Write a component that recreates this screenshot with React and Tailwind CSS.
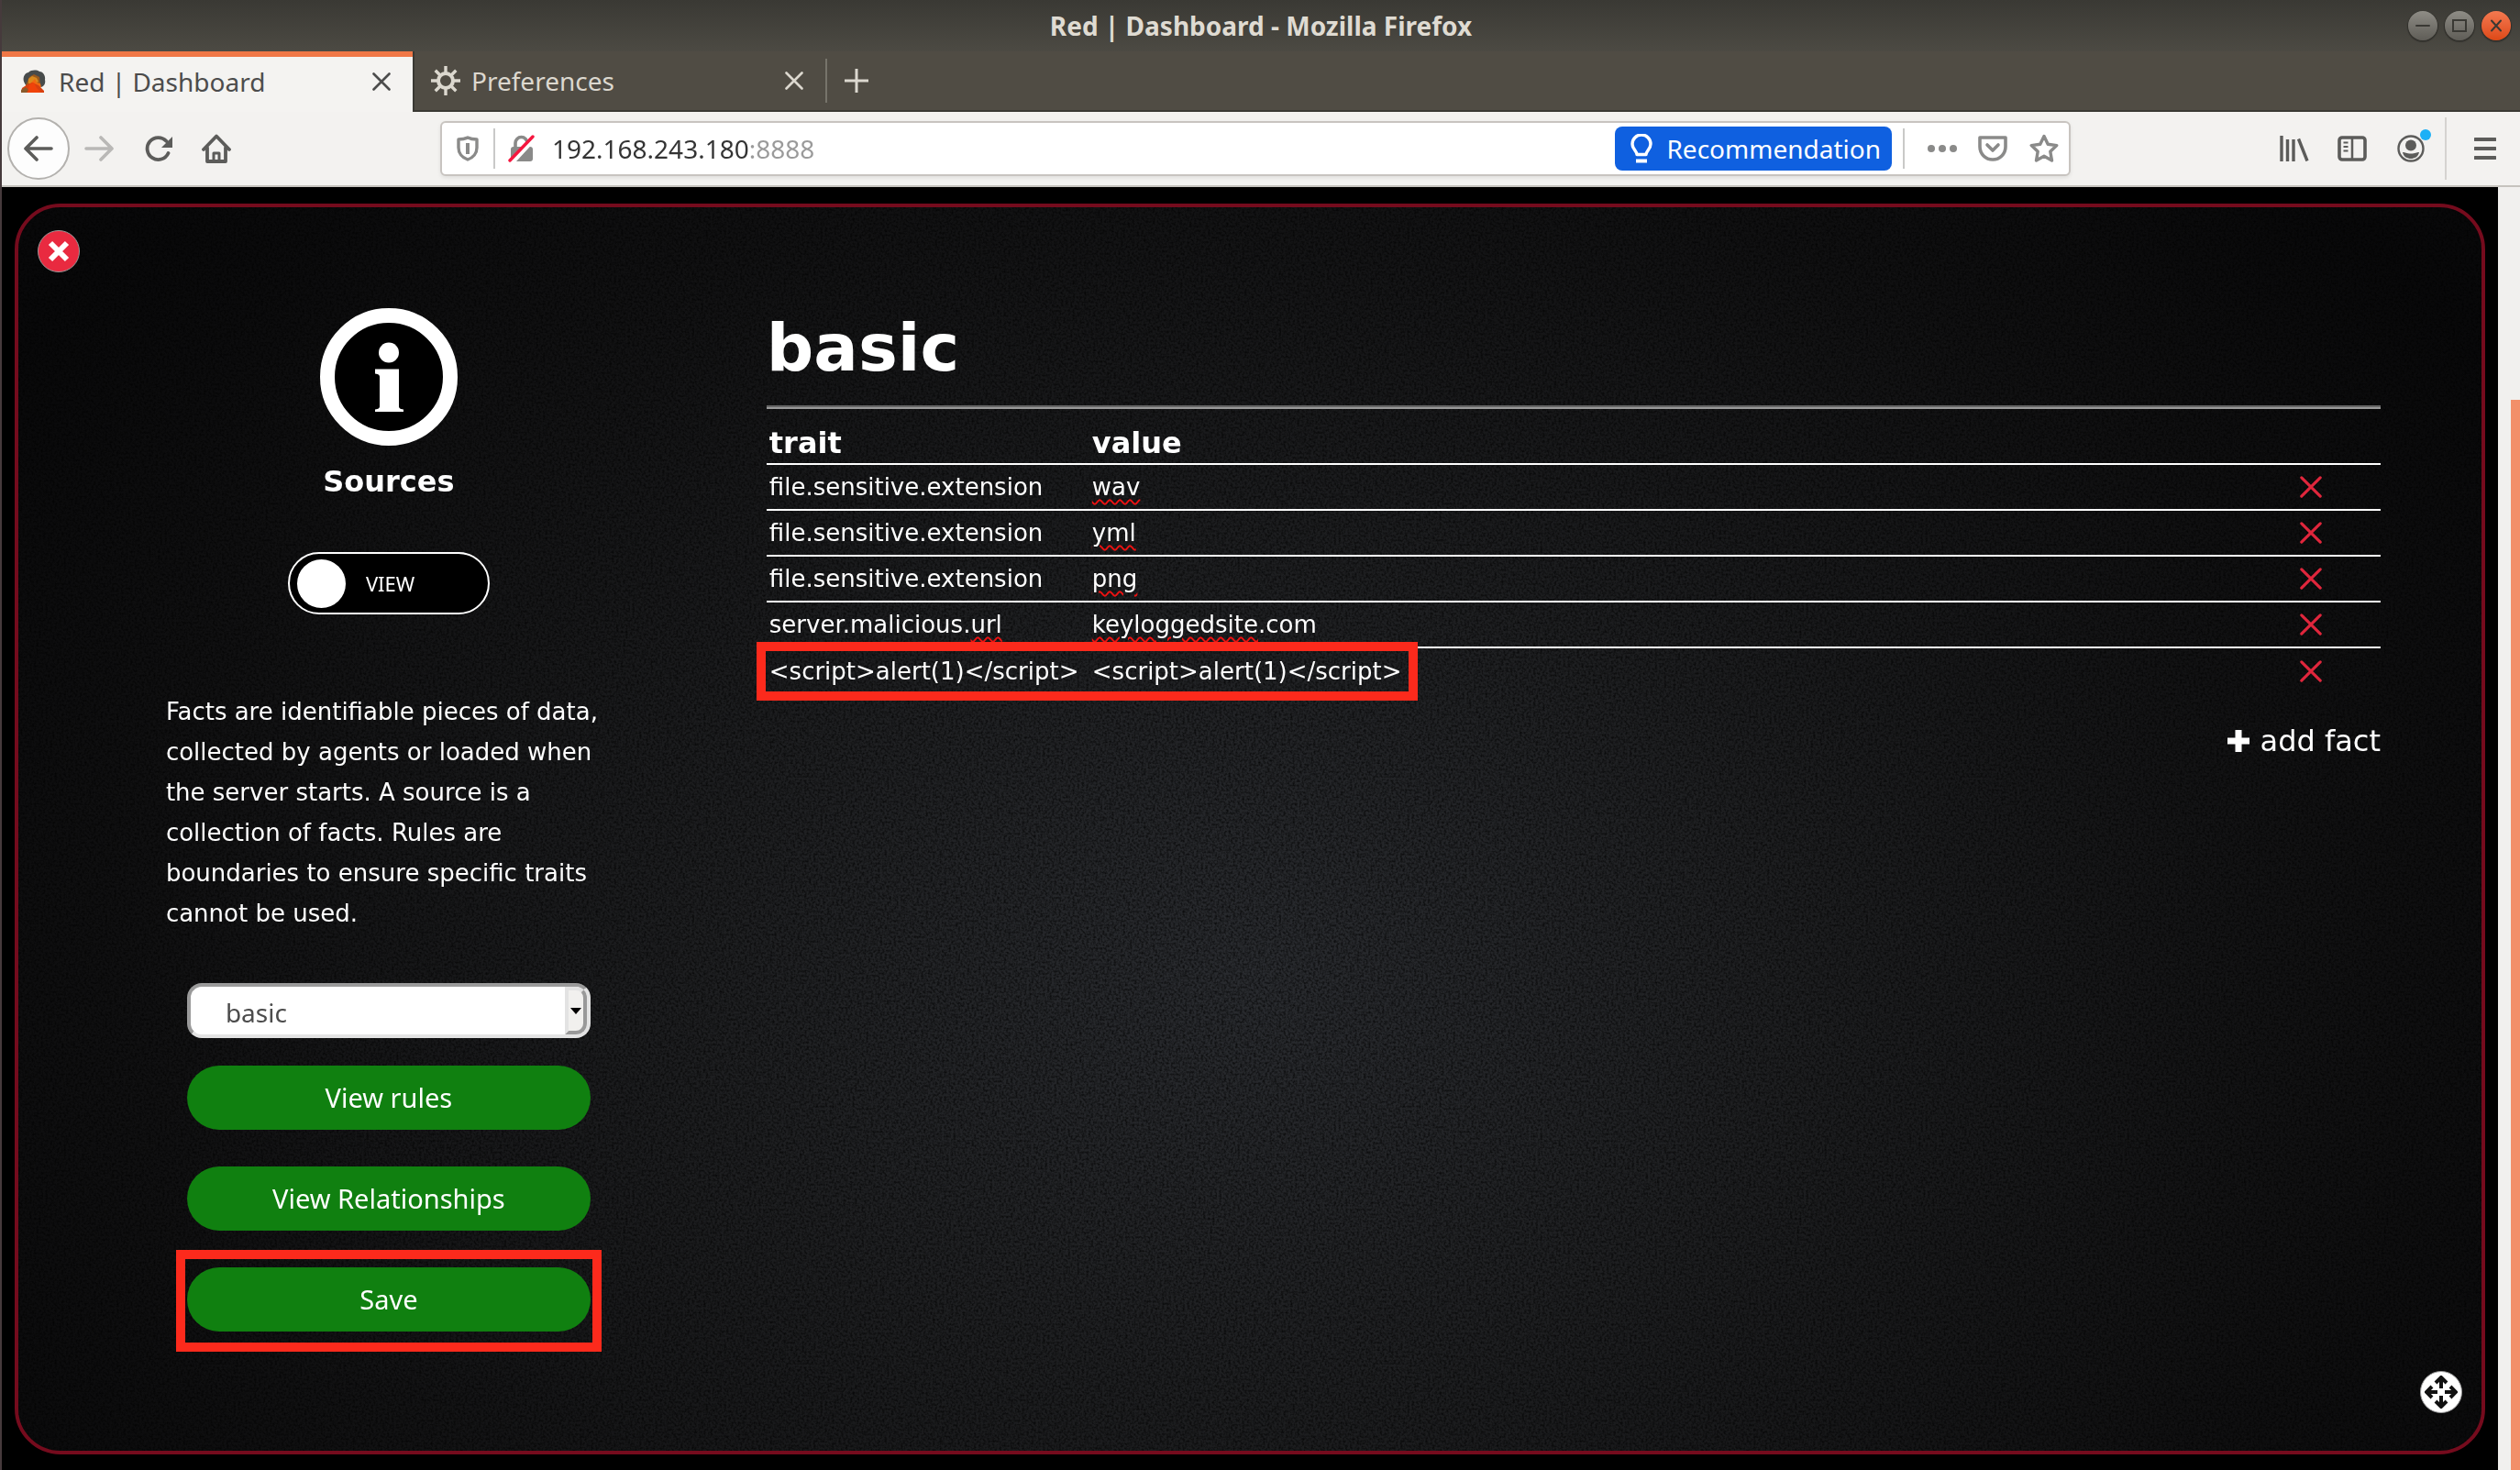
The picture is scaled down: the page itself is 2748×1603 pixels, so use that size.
const UI = "font-['Noto_Sans',sans-serif]";

function Ico({ vb = "0 0 16 16", className, children }) {
  return (
    <svg viewBox={vb} className={className} fill="none" stroke="currentColor" strokeWidth="2" strokeLinecap="round" strokeLinejoin="round" aria-hidden="true">
      {children}
    </svg>
  );
}

function CloseX({ className }) {
  return (
    <Ico vb="0 0 20 20" className={className}>
      <path d="M1.500 1.500l17 17M18.500 1.500l-17 17" strokeWidth="2.600" />
    </Ico>
  );
}

function TitleBar() {
  const dot = "flex size-8 items-center justify-center rounded-full shadow-[0_1px_1px_1px_rgba(0,0,0,0.3)]";
  return (
    <header className="grid h-14 grid-cols-[1fr_auto_1fr] items-center bg-linear-to-b from-[#3a3934] to-[#4c4a43]">
      <h1 className="col-start-2 text-[28px] font-bold leading-8 text-[#dfdbd2]">Red | Dashboard - Mozilla Firefox</h1>
      <div className="flex justify-end gap-2 pr-[10px] text-[#3a3934]">
        <button aria-label="Minimize" className={`${dot} bg-linear-to-b from-[#8f8d86] to-[#5f5d57]`}>
          <Ico className="size-4"><path d="M1 8h14" /></Ico>
        </button>
        <button aria-label="Maximize" className={`${dot} bg-linear-to-b from-[#8f8d86] to-[#5f5d57]`}>
          <Ico className="size-4"><path d="M1 2h14v12H1z" strokeLinejoin="miter" /></Ico>
        </button>
        <button aria-label="Close" className={`${dot} bg-linear-to-b from-[#f4794f] to-[#dd4814]`}>
          <Ico className="size-4"><path d="M3 2.500l10 11M13 2.500l-10 11" /></Ico>
        </button>
      </div>
    </header>
  );
}

function Tabs() {
  return (
    <nav className="flex h-[66px] items-stretch bg-[#504c44]" aria-label="Tabs">
      <div className="flex w-[448px] items-center border-t-4 border-[#f07746] bg-[#f4f3f1] pb-1 pl-5 pr-6 text-[#4c4c4c] shadow-[inset_0_2px_0_#f07746]">
        <svg viewBox="0 0 28 26" className="w-7" aria-hidden="true">
          <path d="M5 15C2 10 4 4 9 3c3-3 9-3 12-1 4 0 7 5 6 9 1 4-1 7-4 8l-8 1H8z" fill="#474b4b" />
          <path d="M6 17l4-9 5-3 6 3 1 9-5 4H8z" fill="#9a5a1e" />
          <path d="M9 10l4-3 5 2 2 4-6 3-5-1z" fill="#d98a1e" />
          <path d="M12 14l4-4 2 4 4 1 1 4-9 2z" fill="#f06a10" />
          <path d="M1 25l1-5 6-4 5-2 7 3 6 6v2z" fill="#d8400f" />
          <path d="M10 16l5-2 3 6 5 5H8z" fill="#f0430a" />
          <path d="M1 22l5-3 3 3-2 3H1z" fill="#8a5a2c" />
        </svg>
        <span className="ml-[14px] flex-1 text-[28px] leading-9">Red | Dashboard</span>
        <button aria-label="Close tab"><CloseX className="size-5" /></button>
      </div>
      <div className="flex w-[450px] items-center border-b-2 border-l-2 border-[#3a3934] pl-[18px] pr-6 text-[#dcd8cf]">
        <svg viewBox="0 0 32 32" className="size-8" fill="none" stroke="currentColor" aria-hidden="true">
          <circle cx="16" cy="16" r="8" strokeWidth="4" />
          <path d="M16 0v7M16 25v7M0 16h7M25 16h7M4.700 4.700l5 5M22.300 22.300l5 5M27.300 4.700l-5 5M4.700 27.300l5-5" strokeWidth="3.400" />
        </svg>
        <span className="ml-3 flex-1 text-[28px] leading-9">Preferences</span>
        <button aria-label="Close tab"><CloseX className="size-5" /></button>
      </div>
      <div className="flex flex-1 items-center border-b-2 border-[#3a3934] text-[#dcd8cf]">
        <span className="h-12 w-[2px] bg-[#77746b]" />
        <button aria-label="New tab" className="ml-[18px]">
          <Ico vb="0 0 28 28" className="size-7"><path d="M14 1v26M1 14h26" strokeWidth="3" strokeLinecap="butt" /></Ico>
        </button>
      </div>
    </nav>
  );
}

function Toolbar() {
  return (
    <div className="flex h-[82px] items-center border-b-2 border-[#c6c3be] bg-[#f3f2f0] pl-[6px] pr-[26px] text-[#5c5c5a]">
      <button aria-label="Back" className="flex size-[68px] items-center justify-center rounded-full border-2 border-[#b3b1ae] bg-[#fdfdfd]">
        <Ico vb="0 0 32 28" className="h-7 w-8"><path d="M30 14H3M14 2L2 14l12 12" strokeWidth="3.600" /></Ico>
      </button>
      <button aria-label="Forward" className="ml-4 text-[#b9b8b6]" disabled>
        <Ico vb="0 0 32 28" className="h-7 w-8"><path d="M2 14h27M18 2l12 12-12 12" strokeWidth="3.600" /></Ico>
      </button>
      <button aria-label="Reload" className="ml-[34px]">
        <Ico vb="0 0 32 28" className="h-7 w-8">
          <path d="M25.500 19A12 12 0 1 1 23.500 6" strokeWidth="3.800" />
          <path d="M30 1v12H18z" fill="currentColor" stroke="none" />
        </Ico>
      </button>
      <button aria-label="Home" className="ml-[30px]">
        <Ico vb="0 0 32 32" className="size-8">
          <path d="M2 17L16 2.500 30 17M6 15v15h20V15" strokeWidth="3.800" />
          <path d="M13 30v-9h6v9" strokeWidth="3" />
        </Ico>
      </button>
      <div className="mx-[228px] flex h-[60px] flex-1 items-center rounded-md border-2 border-[#c8c4c0] bg-white pl-4 pr-[11px] text-[#8a8a89] shadow-[0_2px_4px_rgba(0,0,0,0.08)]">
        <Ico vb="0 0 24 28" className="h-7 w-6">
          <path d="M12 2c3 1.500 6 2 10 2v9c0 6-4 11-10 13C6 24 2 19 2 13V4c4 0 7-.5 10-2z" strokeWidth="3.400" />
          <path d="M12 8v12" strokeWidth="4" strokeLinecap="butt" />
        </Ico>
        <span className="ml-4 h-11 w-[2px] bg-[#c9c9c8]" />
        <Ico vb="0 0 30 30" className="ml-[14px] size-[30px]">
          <path d="M8 14V9a6.500 6.500 0 0 1 13 0v5" strokeWidth="3.600" />
          <rect x="3" y="13" width="24" height="16" rx="3" fill="currentColor" stroke="none" />
          <path d="M4 30L28 4" stroke="#fff" strokeWidth="6" />
          <path d="M2 28L27 2" stroke="#f5173f" strokeWidth="3.400" />
        </Ico>
        {/* The port is dimmed by the hard colour stop after the host. */}
        <input
          aria-label="Address"
          defaultValue="192.168.243.180:8888"
          className="ml-[18px] h-11 min-w-0 flex-1 bg-[linear-gradient(to_right,#333_215px,#9a9a9a_215px)] bg-clip-text text-[28px] leading-[44px] text-transparent caret-black outline-none"
        />
        <button className="flex h-12 items-center rounded-lg bg-[#0f60e0] pl-4 pr-3 text-[28px] text-white">
          <Ico vb="0 0 26 32" className="h-8 w-[26px]">
            <path d="M8 22.500C8 19 3 16.500 3 11a10 10 0 0 1 20 0c0 5.500-5 8-5 11.500z" strokeWidth="3.400" />
            <path d="M7 29.500h12" strokeWidth="4" strokeLinecap="butt" />
          </Ico>
          <span className="ml-[14px]">Recommendation</span>
        </button>
        <span className="ml-3 h-11 w-[2px] bg-[#c9c9c8]" />
        <button aria-label="Page actions" className="ml-6">
          <svg viewBox="0 0 34 10" className="w-[34px]" fill="currentColor"><circle cx="5" cy="5" r="4" /><circle cx="17" cy="5" r="4" /><circle cx="29" cy="5" r="4" /></svg>
        </button>
        <button aria-label="Save to Pocket" className="ml-[22px]">
          <Ico vb="0 0 32 28" className="h-7 w-8">
            <path d="M2 2h28v10a14 14 0 0 1-28 0z" strokeWidth="3.600" />
            <path d="M10 10l6 6 6-6" strokeWidth="3.600" />
          </Ico>
        </button>
        <button aria-label="Bookmark" className="ml-6">
          <Ico vb="0 0 32 32" className="size-8"><path d="M16 2.500l4.200 8.800 9.600 1.300-7 6.700 1.700 9.700-8.500-4.700L7.500 29l1.700-9.700-7-6.700 9.600-1.300z" strokeWidth="3.400" /></Ico>
        </button>
      </div>
      <button aria-label="Library">
        <Ico vb="0 0 32 28" className="h-7 w-8"><path d="M2 0v28M8.500 4v24M15 4v24M20.500 3.500L30 27.500" strokeWidth="3.400" strokeLinecap="butt" /></Ico>
      </button>
      <button aria-label="Sidebars" className="ml-[31px]">
        <Ico vb="0 0 32 28" className="h-7 w-8">
          <rect x="2" y="2" width="28" height="24" rx="3" strokeWidth="3.600" />
          <path d="M16 3v22" strokeWidth="2.500" />
          <path d="M6.500 7.500h5M6.500 12h5M6.500 16.500h5" strokeWidth="2.200" strokeLinecap="butt" />
        </Ico>
      </button>
      <button aria-label="Account" className="relative ml-[33px]">
        <Ico vb="0 0 30 30" className="size-[30px]">
          <circle cx="15" cy="15" r="13.500" strokeWidth="2.400" />
          <circle cx="15" cy="11.500" r="6" fill="currentColor" stroke="none" />
          <path d="M6 19c3 0 4 1.500 9 1.500S21 19 24 19c-1 5-5 7-9 7s-8-2-9-7z" fill="currentColor" stroke="none" />
        </Ico>
        <span className="absolute -right-[7px] -top-[6px] size-3 rounded-full bg-[#1cb0f6]" />
      </button>
      <span className="ml-[22px] h-[68px] w-[2px] bg-[#d5d3d0]" />
      <button aria-label="Menu" className="ml-[30px]">
        <Ico vb="0 0 24 24" className="size-6"><path d="M1 2h22M1 12h22M1 22h22" strokeWidth="4" /></Ico>
      </button>
    </div>
  );
}

const greenButton = "h-[70px] rounded-full bg-[#108010] text-[29px] text-white font-['Noto_Sans',sans-serif]";

function Sidebar() {
  return (
    <aside className="flex w-[30%] flex-col items-center pl-[2px] pt-[110px]">
      <svg viewBox="0 0 150 150" className="size-[150px]" role="img" aria-label="Info">
        <circle cx="75" cy="75" r="67" fill="#000" stroke="#fff" strokeWidth="16" />
        <circle cx="75" cy="48.500" r="11" fill="#fff" />
        <path d="M60 66.500h26v40.500c0 2 1 3 5 3.500v2.500H60v-2.500c4-.5 5-1.500 5-3.500V75c0-2-1-3-5-3.500z" fill="#fff" />
      </svg>
      <h2 className="mt-5 text-[32px] font-bold leading-[38px]">Sources</h2>
      <label className="mt-[58px] flex h-[68px] w-[220px] cursor-pointer items-center rounded-full border-2 border-white bg-black pl-2">
        <input type="checkbox" className="size-[53px] appearance-none rounded-full bg-white" />
        <span className={`ml-[22px] text-[22px] leading-8 ${UI}`}>VIEW</span>
      </label>
      <p className="mt-[84px] w-[486px] text-[26px] leading-[44px]">
        Facts are identifiable pieces of data, collected by agents or loaded when the server starts. A source is a collection of facts. Rules are boundaries to ensure specific traits cannot be used.
      </p>
      <div className="relative mt-[54px]">
        <select aria-label="Source" className={`block h-[60px] w-[440px] appearance-none rounded-2xl border-4 border-b-[#e3e3e3] border-l-[#9a9a9a] border-r-[#e3e3e3] border-t-[#9a9a9a] bg-white pl-[38px] pt-1 text-[28px] text-[#4c4c4c] ${UI}`}>
          <option>basic</option>
        </select>
        <span className="pointer-events-none absolute bottom-1 right-1 top-1 flex w-6 items-center justify-center rounded-r-xl border-4 border-b-[#999] border-l-[#e3e3e3] border-r-[#999] border-t-[#e3e3e3] bg-[#f1f0ee]">
          <svg viewBox="0 0 12 7" className="w-3 shrink-0"><path d="M0 0h12L6 7z" fill="#000" /></svg>
        </span>
      </div>
      <button className={`mt-[30px] w-[440px] ${greenButton}`}>View rules</button>
      <button className={`mt-10 w-[440px] ${greenButton}`}>View Relationships</button>
      <div className="mt-[21px] flex w-[464px] border-10 border-[#fc2a1c] px-[2px] pb-3 pt-[9px]">
        <button className={`flex-1 ${greenButton}`}>Save</button>
      </div>
    </aside>
  );
}

const bad = "underline decoration-[#ee1111] decoration-wavy decoration-2 underline-offset-4";

const facts = [
  ["file.sensitive.extension", <span className={bad}>wav</span>],
  ["file.sensitive.extension", <span className={bad}>yml</span>],
  ["file.sensitive.extension", <span className={bad}>png</span>],
  [<>server.malicious.<span className={bad}>url</span></>, <><span className={bad}>keyloggedsite</span>.com</>],
  ["<script>alert(1)</script>", "<script>alert(1)</script>"],
];

function Facts() {
  return (
    <section className="flex-1 pl-[10px] pr-[110px] pt-[111px]">
      <h2 className="text-[72px] font-bold leading-[84px]">basic</h2>
      <hr className="mt-[21px] h-1 border-b-2 border-t-2 border-b-[#999] border-t-[#666]" />
      <div className="relative">
        <table className="mt-3 w-full border-collapse text-left">
          <thead>
            <tr className="h-12 border-b-2 border-white text-[32px] leading-[38px]">
              <th className="w-1/5 px-[3px] pt-[2px] font-bold">trait</th>
              <th className="px-[3px] pt-[2px] font-bold">value</th>
              <th className="w-[152px]" aria-label="Remove" />
            </tr>
          </thead>
          <tbody>
            {facts.map(([trait, value], i) => (
              <tr key={i} className="h-[50px] border-b-2 border-white text-[26px] leading-[30px] last:border-0">
                <td className="whitespace-nowrap px-[3px]">{trait}</td>
                <td className="px-[3px]">{value}</td>
                <td className="text-[#e0263c]">
                  <button aria-label="Remove fact" className="mx-auto block"><CloseX className="size-6" /></button>
                </td>
              </tr>
            ))}
          </tbody>
        </table>
        <div className="pointer-events-none absolute -bottom-2 -left-[11px] h-16 w-[721px] border-10 border-[#fc2a1c]" />
      </div>
      <div className="mt-[33px] flex justify-end">
        <button className="flex items-center gap-3 text-[32px] leading-[38px]">
          <svg viewBox="0 0 24 24" className="size-6" aria-hidden="true"><path d="M12 0v24M0 12h24" stroke="#fff" strokeWidth="7" /></svg>
          add fact
        </button>
      </div>
    </section>
  );
}

/* Woven-fabric grain multiplied over the panel's radial gradient. */
function Grain() {
  return (
    <svg className="absolute inset-0 -z-10 size-full rounded-[46px] mix-blend-multiply" aria-hidden="true">
      <filter id="grain" x="0" y="0" width="100%" height="100%" colorInterpolationFilters="sRGB">
        <feTurbulence type="fractalNoise" baseFrequency="0.4" numOctaves="2" seed="3" />
        <feColorMatrix values="1.4 0 0 0 0.1  1.4 0 0 0 0.1  1.4 0 0 0 0.1  0 0 0 0 1" />
      </filter>
      <rect width="100%" height="100%" filter="url(#grain)" />
    </svg>
  );
}

export default function App() {
  return (
    <div className={`flex min-h-screen flex-col border-l-2 border-[#463a3c] bg-black ${UI}`}>
      <TitleBar />
      <Tabs />
      <Toolbar />
      <div className="flex flex-1">
        <main className="flex flex-1 px-[14px] pb-[17px] pt-[18px] font-['DejaVu_Sans',sans-serif] text-white">
          <div className="relative isolate flex flex-1 rounded-[50px] border-4 border-[#750b1d] bg-[radial-gradient(ellipse_60%_90%_at_50%_62%,#292b2f_0%,#1e1f21_35%,#101011_75%,#080809_100%)]">
            <Grain />
            <Sidebar />
            <Facts />
            <button aria-label="Close panel" className="absolute left-[21px] top-[25px] flex size-[46px] items-center justify-center rounded-full border border-[#999] bg-[#e92a40]">
              <Ico vb="0 0 24 24" className="size-6 text-white"><path d="M3 3l18 18M21 3L3 21" strokeWidth="6" strokeLinecap="butt" /></Ico>
            </button>
            <button aria-label="Move panel" className="absolute bottom-[41px] right-[21px] flex size-[46px] items-center justify-center rounded-full border border-[#999] bg-white">
              <svg viewBox="0 0 36 36" className="size-9" fill="none" stroke="#111" strokeWidth="4" aria-hidden="true">
                <path d="M18 14V3M18 22v11M14 18H3M22 18h11M12 8l6-6 6 6M12 28l6 6 6-6M8 12l-6 6 6 6M28 12l6 6-6 6" />
              </svg>
            </button>
          </div>
        </main>
        <div className="flex w-6 justify-end bg-[#f1f0ee] pt-[232px]">
          <div className="w-[10px] bg-[#f28f69]" />
        </div>
      </div>
    </div>
  );
}
